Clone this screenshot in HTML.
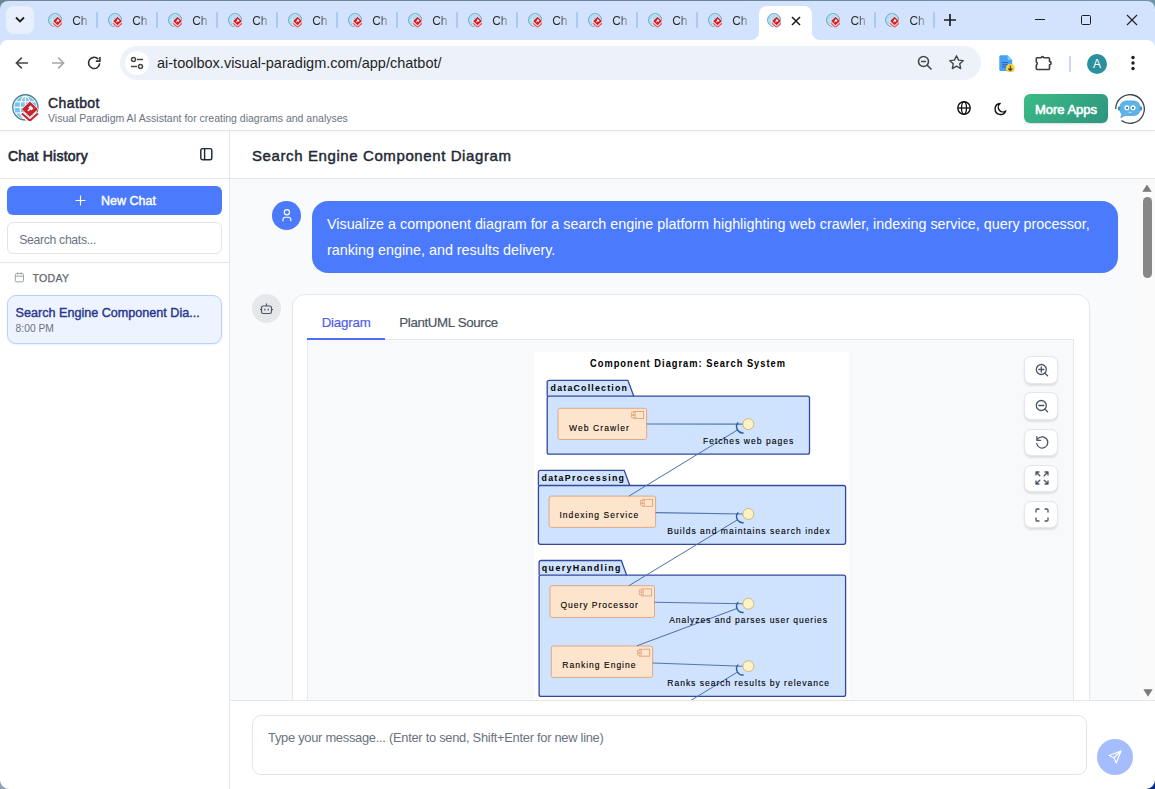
<!DOCTYPE html>
<html><head><meta charset="utf-8">
<style>
*{box-sizing:border-box;margin:0;padding:0}
html,body{width:1155px;height:789px;overflow:hidden;background:#fff;font-family:"Liberation Sans",sans-serif}
.abs{position:absolute}
#win{position:absolute;left:0;top:1px;width:1155px;height:788px;background:#d3e3fd;border-radius:8px;overflow:hidden}
.tab{position:absolute;top:0;height:39px;width:60px}
.fav{position:absolute;top:12.2px;width:14.4px;height:14.4px}
.tt{position:absolute;top:13.3px;font-size:12px;color:#2a2a2a;width:15px;overflow:hidden;white-space:nowrap;line-height:14px;-webkit-mask-image:linear-gradient(90deg,#000 45%,rgba(0,0,0,.35) 100%)}
.sep{position:absolute;top:11px;width:2px;height:16px;background:#a8c7fa;border-radius:1px}
#toolbar{position:absolute;left:0;top:39px;width:1155px;height:47px;background:#fff;border-radius:8px 8px 0 0;border-bottom:1px solid #dcdfdb}
#omni{position:absolute;left:120px;top:6px;width:861px;height:34px;background:#edf2fa;border-radius:17px}
#apphdr{position:absolute;z-index:5;left:0;top:86px;width:1155px;height:44px;background:#fff;box-shadow:0 1px 0 #e3e5e9,0 2px 3px rgba(0,0,0,.05)}
#sidebar{position:absolute;left:0;top:130px;width:230px;height:659px;background:#fff;border-right:1px solid #e5e7eb}
#main{position:absolute;left:230px;top:130px;width:925px;height:659px;background:#f9fafb}
</style></head><body>
<div class="abs" style="left:0;top:0;width:1155px;height:12px;background:linear-gradient(90deg,#6f8796,#6a8595 60%,#6f95a6)"></div>
<svg width="0" height="0" style="position:absolute">
 <defs>
  <symbol id="vp" viewBox="0 0 27 27">
   <circle cx="13.35" cy="13.35" r="12.6" fill="#fff" stroke="#4d7c90" stroke-width="1.3"/>
   <circle cx="13.35" cy="13.35" r="11.1" fill="#79c5ef"/>
   <g stroke="#fff" stroke-width="1.1" fill="none">
    <ellipse cx="13.35" cy="13.35" rx="5.2" ry="11.1"/>
    <line x1="13.35" y1="2" x2="13.35" y2="25"/>
    <line x1="2" y1="13.35" x2="25" y2="13.35"/>
    <line x1="3.5" y1="7.8" x2="23.2" y2="7.8"/>
    <line x1="3.5" y1="19" x2="23.2" y2="19"/>
   </g>
   <path d="M9.4 19.6 L17.9 27 L26.4 19.6" stroke="#fff" stroke-width="4" fill="none"/>
   <path d="M9.9 19.6 L17.9 26.6 L25.9 19.6" stroke="#cc2229" stroke-width="2" fill="none"/>
   <path d="M17.9 6.8 L26.5 15.2 L17.9 23.6 L9.3 15.2Z" fill="#fff"/>
   <path d="M17.9 7.6 L25.9 15.2 L17.9 22.8 L9.9 15.2Z" fill="#cc2229"/>
   <path d="M18.6 11.6 L21.5 14.4 L19.3 16.5 L18.4 15.6 L16.4 17.4 L15.4 16.4 L17.4 14.5 L16.4 13.6Z" fill="#fff"/>
  </symbol>
<symbol id="vpf" viewBox="0 0 27 27">
   <circle cx="13.35" cy="13.35" r="12.4" fill="#aadcf6" stroke="#6f9cb0" stroke-width="1.6"/>
   <g stroke="#d6f0fc" stroke-width="1.2" fill="none">
    <ellipse cx="13.35" cy="13.35" rx="5.2" ry="11.1"/>
    <line x1="2" y1="13.35" x2="25" y2="13.35"/>
   </g>
   <path d="M8.6 19.4 L17.9 27.5 L27.2 19.4" stroke="#fff" stroke-width="4" fill="none"/>
   <path d="M9.2 19.4 L17.9 27 L26.6 19.4" stroke="#e0616a" stroke-width="2.6" fill="none"/>
   <path d="M17.9 6 L27 15 L17.9 24 L8.8 15Z" fill="#fff"/>
   <path d="M17.9 7 L26.2 15 L17.9 23 L9.6 15Z" fill="#d01c25"/>
   <path d="M18.6 11.4 L21.7 14.4 L19.3 16.7 L18.3 15.7 L16.2 17.6 L15.1 16.5 L17.3 14.5 L16.2 13.6Z" fill="#fff"/>
  </symbol>
 </defs>
</svg>
<div id="win">
 <!-- tab strip -->
 <div class="abs" style="left:6px;top:5px;width:28px;height:28px;background:#e9f0fd;border-radius:8px"></div>
 <svg class="abs" style="left:14px;top:14px" width="12" height="10" viewBox="0 0 12 10"><path d="M2 2.5 L6 6.5 L10 2.5" stroke="#1f1f1f" stroke-width="1.8" fill="none"/></svg>
 <div id="tabs"><svg class="fav" style="left:48.1px" viewBox="0 0 27 27"><use href="#vpf"/></svg><div class="tt" style="left:72.2px">Ch</div><div class="sep" style="left:96.0px"></div><svg class="fav" style="left:108.1px" viewBox="0 0 27 27"><use href="#vpf"/></svg><div class="tt" style="left:132.2px">Ch</div><div class="sep" style="left:156.0px"></div><svg class="fav" style="left:168.1px" viewBox="0 0 27 27"><use href="#vpf"/></svg><div class="tt" style="left:192.2px">Ch</div><div class="sep" style="left:216.0px"></div><svg class="fav" style="left:228.1px" viewBox="0 0 27 27"><use href="#vpf"/></svg><div class="tt" style="left:252.2px">Ch</div><div class="sep" style="left:276.0px"></div><svg class="fav" style="left:288.1px" viewBox="0 0 27 27"><use href="#vpf"/></svg><div class="tt" style="left:312.2px">Ch</div><div class="sep" style="left:336.0px"></div><svg class="fav" style="left:348.1px" viewBox="0 0 27 27"><use href="#vpf"/></svg><div class="tt" style="left:372.2px">Ch</div><div class="sep" style="left:396.0px"></div><svg class="fav" style="left:408.1px" viewBox="0 0 27 27"><use href="#vpf"/></svg><div class="tt" style="left:432.2px">Ch</div><div class="sep" style="left:456.0px"></div><svg class="fav" style="left:468.1px" viewBox="0 0 27 27"><use href="#vpf"/></svg><div class="tt" style="left:492.2px">Ch</div><div class="sep" style="left:516.0px"></div><svg class="fav" style="left:528.1px" viewBox="0 0 27 27"><use href="#vpf"/></svg><div class="tt" style="left:552.2px">Ch</div><div class="sep" style="left:576.0px"></div><svg class="fav" style="left:588.1px" viewBox="0 0 27 27"><use href="#vpf"/></svg><div class="tt" style="left:612.2px">Ch</div><div class="sep" style="left:636.0px"></div><svg class="fav" style="left:648.1px" viewBox="0 0 27 27"><use href="#vpf"/></svg><div class="tt" style="left:672.2px">Ch</div><div class="sep" style="left:696.0px"></div><svg class="fav" style="left:708.1px" viewBox="0 0 27 27"><use href="#vpf"/></svg><div class="tt" style="left:732.2px">Ch</div><svg class="fav" style="left:826.3px" viewBox="0 0 27 27"><use href="#vpf"/></svg><div class="tt" style="left:850.4px">Ch</div><div class="sep" style="left:874.2px"></div><svg class="fav" style="left:885.3px" viewBox="0 0 27 27"><use href="#vpf"/></svg><div class="tt" style="left:909.4px">Ch</div><div class="sep" style="left:933.2px"></div></div>
 <!-- active tab -->
 <div class="abs" style="left:759px;top:5px;width:53px;height:35px;background:#fff;border-radius:8px 8px 0 0"></div>
 <div class="abs" style="left:751px;top:31px;width:8px;height:8px;background:radial-gradient(circle at 0 0,#d3e3fd 7.5px,#fff 8.5px)"></div>
 <div class="abs" style="left:812px;top:31px;width:8px;height:8px;background:radial-gradient(circle at 100% 0,#d3e3fd 7.5px,#fff 8.5px)"></div>
 <svg class="fav" style="left:767.3px" viewBox="0 0 27 27"><use href="#vpf"/></svg>
 <svg class="abs" style="left:791px;top:15px" width="10" height="10" viewBox="0 0 10 10"><path d="M1 1L9 9M9 1L1 9" stroke="#1f1f1f" stroke-width="1.6"/></svg>
 <!-- new tab + -->
 <svg class="abs" style="left:943px;top:12px" width="14" height="14" viewBox="0 0 14 14"><path d="M7 1V13M1 7H13" stroke="#1f1f1f" stroke-width="1.7"/></svg>
 <!-- window controls -->
 <div class="abs" style="left:1035px;top:18px;width:10px;height:1px;background:#1f1f1f"></div>
 <div class="abs" style="left:1081px;top:14px;width:10px;height:10px;border:1px solid #1f1f1f;border-radius:1.5px"></div>
 <svg class="abs" style="left:1126px;top:13.2px" width="12" height="12" viewBox="0 0 12 12"><path d="M1 1L11 11M11 1L1 11" stroke="#1f1f1f" stroke-width="1.1"/></svg>

 <!-- toolbar -->
 <div id="toolbar">
  <svg class="abs" style="left:14px;top:15px" width="16" height="16" viewBox="0 0 16 16"><path d="M14 8H2.8M7.8 2.6L2.4 8L7.8 13.4" stroke="#474747" stroke-width="1.6" fill="none"/></svg>
  <svg class="abs" style="left:50px;top:15px" width="16" height="16" viewBox="0 0 16 16"><path d="M2 8H13.2M8.2 2.6L13.6 8L8.2 13.4" stroke="#a8a8a8" stroke-width="1.6" fill="none"/></svg>
  <svg class="abs" style="left:86px;top:15px" width="16" height="16" viewBox="0 0 16 16"><path d="M13.7 8.3A5.6 5.6 0 1 1 12.2 4.1" stroke="#333" stroke-width="1.6" fill="none"/><path d="M13.9 2V6.1H9.8" stroke="#333" stroke-width="1.6" fill="none"/></svg>
  <div id="omni">
   <div class="abs" style="left:5px;top:5px;width:24px;height:24px;border-radius:12px;background:#fff"></div>
   <svg class="abs" style="left:10px;top:10px" width="14" height="14" viewBox="0 0 14 14"><circle cx="3.5" cy="3.5" r="2" stroke="#474747" stroke-width="1.5" fill="none"/><path d="M7 3.5H13" stroke="#474747" stroke-width="1.5"/><circle cx="10.5" cy="10.5" r="2" stroke="#474747" stroke-width="1.5" fill="none"/><path d="M1 10.5H7" stroke="#474747" stroke-width="1.5"/></svg>
   <div class="abs" style="left:37px;top:9px;font-size:14.5px;color:#1f1f1f;line-height:16px;white-space:nowrap">ai-toolbox.visual-paradigm.com/app/chatbot/</div>
   <svg class="abs" style="left:797px;top:9px" width="16" height="16" viewBox="0 0 16 16"><circle cx="6.5" cy="6.5" r="5" stroke="#474747" stroke-width="1.6" fill="none"/><path d="M4 6.5H9M10 10L14.5 14.5" stroke="#474747" stroke-width="1.6"/></svg>
   <svg class="abs" style="left:828px;top:8px" width="17" height="17" viewBox="0 0 24 24"><path d="M12 2.5L14.9 8.6L21.5 9.4L16.6 13.9L17.9 20.5L12 17.2L6.1 20.5L7.4 13.9L2.5 9.4L9.1 8.6Z" stroke="#474747" stroke-width="2" fill="none" stroke-linejoin="round"/></svg>
  </div>
  <!-- extension doc icon -->
  <svg class="abs" style="left:999px;top:15px" width="17" height="17" viewBox="0 0 17 17"><path d="M1.8 0.3H8.6L13.2 4.9V14.4A1.5 1.5 0 0 1 11.7 15.9H1.8A1.5 1.5 0 0 1 0.3 14.4V1.8A1.5 1.5 0 0 1 1.8 0.3Z" fill="#4a9ff5"/><path d="M8.6 0.3L13.2 4.9H10A1.4 1.4 0 0 1 8.6 3.5Z" fill="#6fe0e8"/><path d="M3 7.6H9M3 9.8H9M3 12H7" stroke="#2a62b8" stroke-width="1"/><circle cx="11.3" cy="13.2" r="4.4" fill="#f5d338"/><path d="M11.3 10.6V15.4M9.3 13.5L11.3 15.5L13.3 13.5" stroke="#3a3a3a" stroke-width="1.1" fill="none"/></svg>
  <svg class="abs" style="left:1035px;top:14px" width="18" height="18" viewBox="0 0 18 18"><path d="M2.2 3.8H6.2A1.2 1.2 0 0 1 8.6 3.8H13.6A0.9 0.9 0 0 1 14.5 4.7V7.6A1.6 1.6 0 0 1 14.5 10.8V14.6A0.9 0.9 0 0 1 13.6 15.5H2.2A0.9 0.9 0 0 1 1.3 14.6V11.3A2 2 0 0 0 1.3 7.9V4.7A0.9 0.9 0 0 1 2.2 3.8Z" stroke="#3c3c3c" stroke-width="1.6" fill="none" stroke-linejoin="round"/></svg>
  <div class="abs" style="left:1069px;top:16px;width:2px;height:16px;background:#c8d7f4"></div>
  <div class="abs" style="left:1087px;top:13.5px;width:20px;height:20px;border-radius:10px;background:#2b8f9d;color:#fff;font-size:12px;line-height:20px;text-align:center">A</div>
  <svg class="abs" style="left:1130px;top:15px" width="6" height="16" viewBox="0 0 6 16"><circle cx="3" cy="2.5" r="1.7" fill="#1f1f1f"/><circle cx="3" cy="8" r="1.7" fill="#1f1f1f"/><circle cx="3" cy="13.5" r="1.7" fill="#1f1f1f"/></svg>
 </div>
</div>

<!-- app header -->
<div id="apphdr">
 <svg class="abs" style="left:12px;top:8px" width="27" height="27" viewBox="0 0 27 27"><use href="#vp"/></svg>
 <div class="abs" style="left:48px;top:9px;font-size:14px;color:#1f2937;line-height:16px;-webkit-text-stroke:0.45px #1f2937;letter-spacing:0.4px">Chatbot</div>
 <div class="abs" style="left:48px;top:26px;font-size:10.5px;color:#6b7280;line-height:13px;white-space:nowrap">Visual Paradigm AI Assistant for creating diagrams and analyses</div>
 <svg class="abs" style="left:956px;top:14px" width="16" height="16" viewBox="0 0 16 16"><circle cx="8" cy="8" r="6.2" stroke="#111" stroke-width="1.4" fill="none"/><ellipse cx="8" cy="8" rx="2.5" ry="6.2" stroke="#111" stroke-width="1.3" fill="none"/><path d="M1.8 8H14.2" stroke="#111" stroke-width="1.3"/></svg>
 <svg class="abs" style="left:992px;top:15px" width="16" height="16" viewBox="0 0 16 16"><path d="M8.2 2.5A5.5 5.5 0 1 0 13.7 10A4.4 4.4 0 0 1 8.2 2.5Z" stroke="#111" stroke-width="1.4" fill="none" stroke-linejoin="round"/></svg>
 <div class="abs" style="left:1024px;top:8px;width:84px;height:29px;border-radius:6px;background:linear-gradient(135deg,#3cbb86,#2c9580);box-shadow:0 1px 2px rgba(0,0,0,.15);color:#fff;font-size:13px;line-height:31px;text-align:center;-webkit-text-stroke:0.6px #fff">More Apps</div>
 <svg class="abs" style="left:1114.6px;top:8.2px" width="30" height="30" viewBox="0 0 30 30"><path d="M0.7 15A14.3 14.3 0 1 1 6.4 26.4" stroke="#3a4350" stroke-width="1.3" fill="none"/>
 <g transform="translate(0,2.2)"><path d="M5.3 10H5A1.2 1.2 0 0 0 5 14.5H5.3ZM24.7 10H25A1.2 1.2 0 0 1 25 14.5H24.7Z" fill="#3d8fc9"/>
 <path d="M11 4.7H19A6 6 0 0 1 25 10.7V13.3A6 6 0 0 1 19 19.3H10L5.8 21.5L6.8 18A6 6 0 0 1 5 13.3V10.7A6 6 0 0 1 11 4.7Z" fill="#5cb4ea" stroke="#3f92cc" stroke-width=".6"/>
 <circle cx="11.9" cy="11.6" r="2.5" fill="#fff"/><circle cx="18.1" cy="11.6" r="2.5" fill="#fff"/>
 <circle cx="12" cy="11.7" r="1.2" fill="#6b7b88"/><circle cx="18" cy="11.7" r="1.2" fill="#6b7b88"/>
 <path d="M13.6 15.8Q15 16.8 16.4 15.8" stroke="#b7e0f7" stroke-width="1.1" fill="none"/></g></svg>
</div>

<!-- sidebar -->
<div id="sidebar">
 <div class="abs" style="left:0;top:0;width:229px;height:49px;border-bottom:1px solid #e5e7eb"></div>
 <div class="abs" style="left:8px;top:17.5px;font-size:14px;color:#1f2937;line-height:16px;white-space:nowrap;-webkit-text-stroke:0.6px #1f2937;letter-spacing:0.25px">Chat History</div>
 <svg class="abs" style="left:199px;top:17px" width="14" height="14" viewBox="0 0 14 14"><rect x="1.8" y="1.6" width="11" height="11.2" rx="1.8" stroke="#1f2937" stroke-width="1.45" fill="none"/><path d="M5.6 1.6V12.8" stroke="#1f2937" stroke-width="1.45"/></svg>
 <div class="abs" style="left:7px;top:56px;width:215px;height:29px;border-radius:6px;background:#4b7bfc"></div>
 <svg class="abs" style="left:74.5px;top:65px" width="11" height="11" viewBox="0 0 11 11"><path d="M5.5 .5V10.5M.5 5.5H10.5" stroke="#fff" stroke-width="1.1"/></svg>
 <div class="abs" style="left:101px;top:64px;font-size:12.5px;color:#fff;line-height:15px;white-space:nowrap;-webkit-text-stroke:0.4px #fff">New Chat</div>
 <div class="abs" style="left:7px;top:92px;width:215px;height:32px;border-radius:6px;border:1px solid #e2e4e8;background:#fff"></div>
 <div class="abs" style="left:19.2px;top:103px;font-size:12.2px;color:#6b7280;line-height:15px;white-space:nowrap;letter-spacing:-0.3px">Search chats...</div>
 <div class="abs" style="left:0;top:132px;width:229px;height:1px;background:#e5e7eb"></div>
 <svg class="abs" style="left:13px;top:141px" width="12" height="12" viewBox="0 0 12 12"><rect x="2.3" y="2.6" width="8.2" height="8.2" rx="1" stroke="#9ca3af" stroke-width="1" fill="none"/><path d="M2.3 5.2H10.5M4.6 1.3V3.4M8.2 1.3V3.4" stroke="#9ca3af" stroke-width="1"/></svg>
 <div class="abs" style="left:32.5px;top:141.5px;font-size:10.6px;color:#5f6673;line-height:13px;white-space:nowrap;letter-spacing:0.25px;-webkit-text-stroke:0.25px #5f6673">TODAY</div>
 <div class="abs" style="left:7px;top:165px;width:215px;height:49px;border-radius:9px;border:1px solid #b9d1fb;background:#eef4ff;box-shadow:0 1px 2px rgba(59,130,246,.12)"></div>
 <div class="abs" style="left:15.6px;top:176px;font-size:12.6px;color:#2a3590;line-height:15px;white-space:nowrap;-webkit-text-stroke:0.4px #2a3590">Search Engine Component Dia...</div>
 <div class="abs" style="left:15.6px;top:192px;font-size:10.3px;color:#6b7280;line-height:13px;white-space:nowrap">8:00 PM</div>
</div>
<div id="main">
 <div class="abs" style="left:0;top:0;width:925px;height:49px;background:#fff;border-bottom:1px solid #e5e7eb"></div>
 <div class="abs" style="left:22px;top:17px;font-size:15px;color:#1f2937;line-height:18px;white-space:nowrap;-webkit-text-stroke:0.45px #1f2937;letter-spacing:0.6px">Search Engine Component Diagram</div>
 <!-- scroll area -->
 <div class="abs" id="scroll" style="left:0;top:49px;width:925px;height:521px;overflow:hidden;background:#f9fafb">
  <!-- user message (coords relative: x-230, y-179) -->
  <div class="abs" style="left:42px;top:22px;width:29px;height:28.5px;border-radius:50%;background:#4b7bfc"></div>
  <svg class="abs" style="left:49px;top:29px" width="15" height="15" viewBox="0 0 15 15"><circle cx="7.9" cy="4.2" r="2.6" stroke="#fff" stroke-width="1.15" fill="none"/><path d="M4 13.2V11.6A2.4 2.4 0 0 1 6.4 9.2H9.4A2.4 2.4 0 0 1 11.8 11.6V13.2" stroke="#fff" stroke-width="1.15" fill="none"/></svg>
  <div class="abs" style="left:82px;top:22px;width:806px;height:72px;border-radius:16px;background:#4b7bfc"></div>
  <div class="abs" style="left:97px;top:32px;font-size:14.33px;color:#fff;line-height:26px;white-space:nowrap">Visualize a component diagram for a search engine platform highlighting web crawler, indexing service, query processor,<br>ranking engine, and results delivery.</div>
  <!-- bot avatar -->
  <div class="abs" style="left:22px;top:115px;width:29px;height:29px;border-radius:50%;background:#e5e7eb"></div>
  <svg class="abs" style="left:29px;top:122px" width="15" height="15" viewBox="0 0 15 15"><rect x="2.5" y="5" width="10" height="7.5" rx="1.8" stroke="#4b5563" stroke-width="1.2" fill="none"/><path d="M7.5 5V2.5M1 8.5H2.5M12.5 8.5H14M5.8 7.8V9.5M9.2 7.8V9.5" stroke="#4b5563" stroke-width="1.2"/></svg>
  <!-- card -->
  <div class="abs" style="left:62px;top:115px;width:798px;height:520px;border-radius:13px;background:#fff;border:1px solid #e5e7eb;box-shadow:0 1px 2px rgba(0,0,0,.04)"></div>
  <div class="abs" style="left:91.7px;top:136px;font-size:13.3px;color:#5160ee;line-height:16px;white-space:nowrap;letter-spacing:-0.2px;-webkit-text-stroke:0.2px #5160ee">Diagram</div>
  <div class="abs" style="left:169.3px;top:136px;font-size:13.3px;color:#4b5563;line-height:16px;white-space:nowrap;letter-spacing:-0.35px;-webkit-text-stroke:0.2px #4b5563">PlantUML Source</div>
  <div class="abs" style="left:77px;top:160px;width:767px;height:1px;background:#e5e7eb"></div>
  <div class="abs" style="left:77px;top:159px;width:78px;height:1.6px;background:#4f6ef7"></div>
  <div class="abs" style="left:77px;top:161px;width:767px;height:400px;background:#f8f9fb;border-left:1px solid #e5e7eb;border-right:1px solid #e5e7eb"></div>
  <!-- diagram -->
  <svg class="abs" style="left:304px;top:173px" width="315" height="400" viewBox="534 352 315 400"><rect x="534" y="352" width="315" height="400" fill="#fff"/><g font-family="Liberation Sans, sans-serif" fill="#000"><text x="590" y="367.3" font-size="10" font-weight="bold" textLength="209.7" lengthAdjust="spacing" transform="translate(590 367.3) scale(0.93 1.04) translate(-590 -367.3)">Component Diagram: Search System</text><path d="M547.2 396.2 V382.3 Q547.2 380.3 549.2 380.3 H627.9 L633.8 396.2" fill="#cfe2fe" stroke="#34489a" stroke-width="1.3"/><rect x="547.2" y="396.2" width="262.29999999999995" height="58.0" rx="2" fill="#cfe2fe" stroke="#34489a" stroke-width="1.3"/><path d="M538.4 485.5 V472.3 Q538.4 470.3 540.4 470.3 H624.2 L629.8 485.5" fill="#cfe2fe" stroke="#34489a" stroke-width="1.3"/><rect x="538.4" y="485.5" width="307.20000000000005" height="58.799999999999955" rx="2" fill="#cfe2fe" stroke="#34489a" stroke-width="1.3"/><path d="M539.1 575.1 V562.5 Q539.1 560.5 541.1 560.5 H621.3 L626.6 575.1" fill="#cfe2fe" stroke="#34489a" stroke-width="1.3"/><rect x="539.1" y="575.1" width="306.5" height="121.29999999999995" rx="2" fill="#cfe2fe" stroke="#34489a" stroke-width="1.3"/><text x="550.6" y="391.0" font-size="9.6" font-weight="bold" textLength="83.0" lengthAdjust="spacing" transform="translate(550.6 391.0) scale(0.92 1) translate(-550.6 -391.0)">dataCollection</text><text x="541.5" y="481.0" font-size="9.6" font-weight="bold" textLength="89.7" lengthAdjust="spacing" transform="translate(541.5 481.0) scale(0.92 1) translate(-541.5 -481.0)">dataProcessing</text><text x="541.8" y="571.3" font-size="9.6" font-weight="bold" textLength="85.5" lengthAdjust="spacing" transform="translate(541.8 571.3) scale(0.92 1) translate(-541.8 -571.3)">queryHandling</text><rect x="558" y="408.3" width="88.60000000000002" height="31.19999999999999" rx="2" fill="#fde4cd" stroke="#e0a27a" stroke-width=".9"/><rect x="633.6" y="411.5" width="10" height="7" fill="#fde4cd" stroke="#e0a27a" stroke-width=".9"/><rect x="631.6" y="412.7" width="4" height="1.8" fill="#fde4cd" stroke="#e0a27a" stroke-width=".7"/><rect x="631.6" y="415.5" width="4" height="1.8" fill="#fde4cd" stroke="#e0a27a" stroke-width=".7"/><rect x="549.1" y="496.1" width="106.5" height="31.299999999999955" rx="2" fill="#fde4cd" stroke="#e0a27a" stroke-width=".9"/><rect x="642.6" y="499.3" width="10" height="7" fill="#fde4cd" stroke="#e0a27a" stroke-width=".9"/><rect x="640.6" y="500.5" width="4" height="1.8" fill="#fde4cd" stroke="#e0a27a" stroke-width=".7"/><rect x="640.6" y="503.3" width="4" height="1.8" fill="#fde4cd" stroke="#e0a27a" stroke-width=".7"/><rect x="550" y="585.7" width="104.5" height="31.799999999999955" rx="2" fill="#fde4cd" stroke="#e0a27a" stroke-width=".9"/><rect x="641.5" y="588.9000000000001" width="10" height="7" fill="#fde4cd" stroke="#e0a27a" stroke-width=".9"/><rect x="639.5" y="590.1000000000001" width="4" height="1.8" fill="#fde4cd" stroke="#e0a27a" stroke-width=".7"/><rect x="639.5" y="592.9000000000001" width="4" height="1.8" fill="#fde4cd" stroke="#e0a27a" stroke-width=".7"/><rect x="551.3" y="646" width="101.30000000000007" height="31.399999999999977" rx="2" fill="#fde4cd" stroke="#e0a27a" stroke-width=".9"/><rect x="639.6" y="649.2" width="10" height="7" fill="#fde4cd" stroke="#e0a27a" stroke-width=".9"/><rect x="637.6" y="650.4000000000001" width="4" height="1.8" fill="#fde4cd" stroke="#e0a27a" stroke-width=".7"/><rect x="637.6" y="653.2" width="4" height="1.8" fill="#fde4cd" stroke="#e0a27a" stroke-width=".7"/><text x="569.0" y="430.7" font-size="9.3" stroke="#000" stroke-width="0.12" textLength="65.1" lengthAdjust="spacing" transform="translate(569.0 430.7) scale(0.92 1.03) translate(-569.0 -430.7)">Web Crawler</text><text x="559.4" y="517.8" font-size="9.3" stroke="#000" stroke-width="0.12" textLength="85.7" lengthAdjust="spacing" transform="translate(559.4 517.8) scale(0.92 1.03) translate(-559.4 -517.8)">Indexing Service</text><text x="560.4" y="608.0" font-size="9.3" stroke="#000" stroke-width="0.12" textLength="84.3" lengthAdjust="spacing" transform="translate(560.4 608.0) scale(0.92 1.03) translate(-560.4 -608.0)">Query Processor</text><text x="562.3" y="667.9" font-size="9.3" stroke="#000" stroke-width="0.12" textLength="79.6" lengthAdjust="spacing" transform="translate(562.3 667.9) scale(0.92 1.03) translate(-562.3 -667.9)">Ranking Engine</text><path d="M646.6 424 L742.9 424.1" stroke="#4f77b0" stroke-width="1.1" fill="none"/><path d="M655.6 512.6 L742.9 514" stroke="#4f77b0" stroke-width="1.1" fill="none"/><path d="M654.5 602.3 L742.9 603.7" stroke="#4f77b0" stroke-width="1.1" fill="none"/><path d="M652.6 663 L742.9 666.2" stroke="#4f77b0" stroke-width="1.1" fill="none"/><path d="M737.51 429.93 L628.9 496.1" stroke="#4a70aa" stroke-width="1" fill="none"/><path d="M738.19 422.55 A6.2 6.2 0 0 0 743.66 432.84" stroke="#2f5d9c" stroke-width="1.4" fill="none"/><path d="M737.50 519.82 L628.9 585.7" stroke="#4a70aa" stroke-width="1" fill="none"/><path d="M738.19 512.45 A6.2 6.2 0 0 0 743.66 522.74" stroke="#2f5d9c" stroke-width="1.4" fill="none"/><path d="M736.99 608.47 L636.9 645.8" stroke="#4a70aa" stroke-width="1" fill="none"/><path d="M738.19 602.15 A6.2 6.2 0 0 0 743.66 612.44" stroke="#2f5d9c" stroke-width="1.4" fill="none"/><path d="M737.50 672.02 L662 718" stroke="#4a70aa" stroke-width="1" fill="none"/><path d="M738.19 664.65 A6.2 6.2 0 0 0 743.66 674.94" stroke="#2f5d9c" stroke-width="1.4" fill="none"/><circle cx="748.4" cy="424.1" r="5.5" fill="#fdf2c6" stroke="#c9b272" stroke-width=".9"/><circle cx="748.4" cy="514" r="5.5" fill="#fdf2c6" stroke="#c9b272" stroke-width=".9"/><circle cx="748.4" cy="603.7" r="5.5" fill="#fdf2c6" stroke="#c9b272" stroke-width=".9"/><circle cx="748.4" cy="666.2" r="5.5" fill="#fdf2c6" stroke="#c9b272" stroke-width=".9"/><text x="702.9" y="443.9" font-size="9.3" stroke="#000" stroke-width="0.12" textLength="98.3" lengthAdjust="spacing" transform="translate(702.9 443.9) scale(0.92 1.03) translate(-702.9 -443.9)">Fetches web pages</text><text x="667.3" y="534.3" font-size="9.3" stroke="#000" stroke-width="0.12" textLength="176.5" lengthAdjust="spacing" transform="translate(667.3 534.3) scale(0.92 1.03) translate(-667.3 -534.3)">Builds and maintains search index</text><text x="669.2" y="623.5" font-size="9.3" stroke="#000" stroke-width="0.12" textLength="171.5" lengthAdjust="spacing" transform="translate(669.2 623.5) scale(0.92 1.03) translate(-669.2 -623.5)">Analyzes and parses user queries</text><text x="667.3" y="686.5" font-size="9.3" stroke="#000" stroke-width="0.12" textLength="175.7" lengthAdjust="spacing" transform="translate(667.3 686.5) scale(0.92 1.03) translate(-667.3 -686.5)">Ranks search results by relevance</text></g></svg>
  <!-- zoom buttons -->
  <div id="zbtns"><div class="abs" style="left:793.5px;top:177.3px;width:34px;height:27.5px;border-radius:7px;background:#fff;border:1px solid #e5e7eb;box-shadow:0 1.5px 2px rgba(0,0,0,.1)"></div><svg class="abs" style="left:803.5px;top:183.1px" width="16" height="16" viewBox="0 0 16 16" stroke="#4b5563" stroke-width="1.3" stroke-linecap="round" stroke-linejoin="round"><circle cx="7.3" cy="7.5" r="5" fill="none"/><path d="M4.8 7.5H9.8M7.3 5V10M10.9 11.1L13.6 13.8"/></svg><div class="abs" style="left:793.5px;top:213.4px;width:34px;height:27.5px;border-radius:7px;background:#fff;border:1px solid #e5e7eb;box-shadow:0 1.5px 2px rgba(0,0,0,.1)"></div><svg class="abs" style="left:803.5px;top:219.2px" width="16" height="16" viewBox="0 0 16 16" stroke="#4b5563" stroke-width="1.3" stroke-linecap="round" stroke-linejoin="round"><circle cx="7.3" cy="7.5" r="5" fill="none"/><path d="M4.8 7.5H9.8M10.9 11.1L13.6 13.8"/></svg><div class="abs" style="left:793.5px;top:249.5px;width:34px;height:27.5px;border-radius:7px;background:#fff;border:1px solid #e5e7eb;box-shadow:0 1.5px 2px rgba(0,0,0,.1)"></div><svg class="abs" style="left:803.5px;top:255.2px" width="16" height="16" viewBox="0 0 16 16" stroke="#4b5563" stroke-width="1.3" stroke-linecap="round" stroke-linejoin="round"><path d="M3.6 5.2A5.6 5.6 0 1 1 2.7 9.6" fill="none"/><path d="M2.9 2.6V6.3H6.6" fill="none"/></svg><div class="abs" style="left:793.5px;top:285.6px;width:34px;height:27.5px;border-radius:7px;background:#fff;border:1px solid #e5e7eb;box-shadow:0 1.5px 2px rgba(0,0,0,.1)"></div><svg class="abs" style="left:803.5px;top:291.4px" width="16" height="16" viewBox="0 0 16 16" stroke="#4b5563" stroke-width="1.3" stroke-linecap="round" stroke-linejoin="round"><path d="M2 2L5.8 5.8M2 2V5M2 2H5M14 2L10.2 5.8M14 2V5M14 2H11M2 14L5.8 10.2M2 14V11M2 14H5M14 14L10.2 10.2M14 14V11M14 14H11" fill="none"/></svg><div class="abs" style="left:793.5px;top:321.7px;width:34px;height:27.5px;border-radius:7px;background:#fff;border:1px solid #e5e7eb;box-shadow:0 1.5px 2px rgba(0,0,0,.1)"></div><svg class="abs" style="left:803.5px;top:327.5px" width="16" height="16" viewBox="0 0 16 16" stroke="#4b5563" stroke-width="1.3" stroke-linecap="round" stroke-linejoin="round"><path d="M2 5V3A1 1 0 0 1 3 2H5M11 2H13A1 1 0 0 1 14 3V5M14 11V13A1 1 0 0 1 13 14H11M5 14H3A1 1 0 0 1 2 13V11" fill="none"/></svg></div>
 </div>
 <!-- scrollbar -->
 <div class="abs" style="left:910px;top:49px;width:15px;height:521px;background:#fafafa"></div>
 <svg class="abs" style="left:912.3px;top:53.5px" width="10" height="8" viewBox="0 0 10 8"><path d="M0.8 7.5L5 1L9.2 7.5Z" fill="#7a7a7a" stroke="#7a7a7a" stroke-width=".6" stroke-linejoin="round"/></svg>
 <div class="abs" style="left:913px;top:67px;width:9px;height:81px;border-radius:5px;background:#878787"></div>
 <svg class="abs" style="left:912.5px;top:558.5px" width="10" height="8" viewBox="0 0 10 8"><path d="M0.8 0.6L5 7.2L9.2 0.6Z" fill="#7a7a7a" stroke="#7a7a7a" stroke-width=".6" stroke-linejoin="round"/></svg>
 <!-- input area -->
 <div class="abs" style="left:0;top:570px;width:925px;height:89px;background:#fff;border-top:1px solid #e5e7eb"></div>
 <div class="abs" style="left:22px;top:585px;width:835px;height:60px;border-radius:9px;border:1px solid #e2e4e8;background:#fff"></div>
 <div class="abs" style="left:38px;top:600px;font-size:12.9px;color:#6b7280;line-height:15px;white-space:nowrap;letter-spacing:-0.28px">Type your message... (Enter to send, Shift+Enter for new line)</div>
 <div class="abs" style="left:867px;top:609px;width:36px;height:36px;border-radius:50%;background:#a5bdfd"></div>
 <svg class="abs" style="left:877px;top:619px" width="16" height="16" viewBox="0 0 16 16"><path d="M14 2L2 6.5L7 8.8L9.3 14Z M14 2L7 8.8" stroke="#fff" stroke-width="1.2" fill="none" stroke-linejoin="round"/></svg>
</div>
<svg class="abs" style="left:0;top:780px;z-index:20" width="9" height="9" viewBox="0 0 9 9"><path d="M0 0A9 9 0 0 0 9 9H0Z" fill="#8ea2b6"/></svg>
<svg class="abs" style="left:1146px;top:780px;z-index:20" width="9" height="9" viewBox="0 0 9 9"><path d="M9 0A9 9 0 0 1 0 9H9Z" fill="#0b2f86"/></svg>
</body></html>
